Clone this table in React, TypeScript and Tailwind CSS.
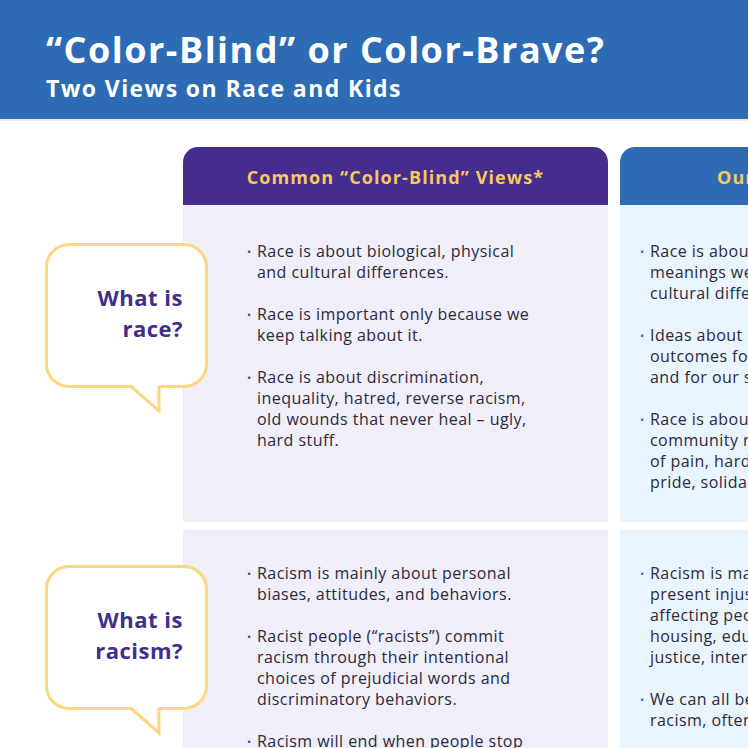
const font = { fontFamily: '"Open Sans", "Liberation Sans", sans-serif' };

type Row = {
  q: string[];
  left: string[][];
  right: string[][];
  top: string;
  pt: string;
};

const rows: Row[] = [
  {
    q: ["What is", "race?"],
    top: "mt-[38px]",
    pt: "pt-[36px]",
    left: [
      ["Race is about biological, physical", "and cultural differences."],
      ["Race is important only because we", "keep talking about it."],
      [
        "Race is about discrimination,",
        "inequality, hatred, reverse racism,",
        "old wounds that never heal – ugly,",
        "hard stuff.",
      ],
    ],
    right: [
      ["Race is about the social", "meanings we give to physical and", "cultural differences."],
      ["Ideas about race shape different", "outcomes for us as individuals", "and for our society."],
      [
        "Race is about identity, culture,",
        "community roots, and a history",
        "of pain, hardship, resilience, joy,",
        "pride, solidarity and love.",
      ],
    ],
  },
  {
    q: ["What is", "racism?"],
    top: "mt-[35px]",
    pt: "pt-[33px]",
    left: [
      ["Racism is mainly about personal", "biases, attitudes, and behaviors."],
      [
        "Racist people (“racists”) commit",
        "racism through their intentional",
        "choices of prejudicial words and",
        "discriminatory behaviors.",
      ],
      ["Racism will end when people stop", "being prejudiced."],
    ],
    right: [
      [
        "Racism is mainly about past and",
        "present injustice in systems",
        "affecting people of color:",
        "housing, education, health, criminal",
        "justice, interpersonal relationships.",
      ],
      ["We can all be part of addressing", "racism, often without realizing it."],
    ],
  },
];

function Bullets({ items, dot }: { items: string[][]; dot: string }) {
  return (
    <ul className="flex flex-col gap-[21px]">
      {items.map((lines, i) => (
        <li key={i} className="flex text-[16px] leading-[21px] tracking-[0.45px] text-[#2b2a3a]">
          <span className={`w-[10px] shrink-0 text-[11px] ${dot}`}>•</span>
          <span className="whitespace-nowrap">
            {lines.map((l, j) => (
              <span key={j} className="block">
                {l}
              </span>
            ))}
          </span>
        </li>
      ))}
    </ul>
  );
}

function Bubble({ q, top }: { q: string[]; top: string }) {
  return (
    <div className={`relative z-10 ml-[45px] -mr-[25px] ${top} h-[145px] w-[163px] shrink-0`}>
      <div className="flex h-full w-full flex-col items-end justify-center rounded-[24px] border-[3px] border-[#fcd77f] bg-white pr-[22px] pb-[6px]">
        {q.map((t) => (
          <span key={t} className="text-[22px] font-bold leading-[31px] tracking-[0.5px] text-[#3f2e8c]">
            {t}
          </span>
        ))}
      </div>
      <svg className="absolute left-[83px] top-[141px]" width="34" height="30" viewBox="0 0 34 30">
        <polygon points="0,0 31,0 31,27" fill="white" />
        <polyline points="2,1.5 31,27 31,1.5" fill="none" stroke="#fcd77f" strokeWidth="3" strokeLinejoin="miter" />
      </svg>
    </div>
  );
}

export default function App() {
  return (
    <div className="h-[748px] w-[748px] overflow-hidden bg-white" style={font}>
      <header className="h-[121px] border-b-2 border-[#ececec] bg-[#2d6bb5] pl-[46px] pt-[28px] text-white">
        <h1 className="text-[36px] font-bold leading-[44px] tracking-[1.5px]">“Color-Blind” or Color-Brave?</h1>
        <h2 className="mt-[1px] text-[23px] font-bold leading-[30px] tracking-[1.4px]">Two Views on Race and Kids</h2>
      </header>

      <div className="flex flex-col pt-[26px]">
        <div className="flex gap-[12px] pl-[183px]">
          <div className="flex h-[58px] w-[425px] shrink-0 items-center justify-center rounded-t-[15px] bg-[#452d8e] pt-[2px] text-[18px] font-bold tracking-[1.1px] text-[#f9c95f]">
            Common “Color-Blind” Views*
          </div>
          <div className="flex h-[58px] w-[425px] shrink-0 items-center rounded-t-[15px] bg-[#2d6bb5] pl-[97px] pt-[2px] text-[18px] font-bold tracking-[1.1px] text-[#f9c95f]">
            Our “Color-Brave” Views
          </div>
        </div>

        {rows.map((r, i) => (
          <div key={i} className={`flex ${i > 0 ? "mt-[8px]" : ""}`}>
            <div className="w-[183px] shrink-0">
              <Bubble q={r.q} top={r.top} />
            </div>
            <div className="flex gap-[12px]">
              <div className={`h-[317px] w-[425px] shrink-0 bg-[#f0eef9] pl-[64px] ${r.pt}`}>
                <Bullets items={r.left} dot="text-[#4a3a93]" />
              </div>
              <div className={`h-[317px] w-[425px] shrink-0 bg-[#eaf4fd] pl-[20px] ${r.pt}`}>
                <Bullets items={r.right} dot="text-[#2d6bb5]" />
              </div>
            </div>
          </div>
        ))}
      </div>
    </div>
  );
}
